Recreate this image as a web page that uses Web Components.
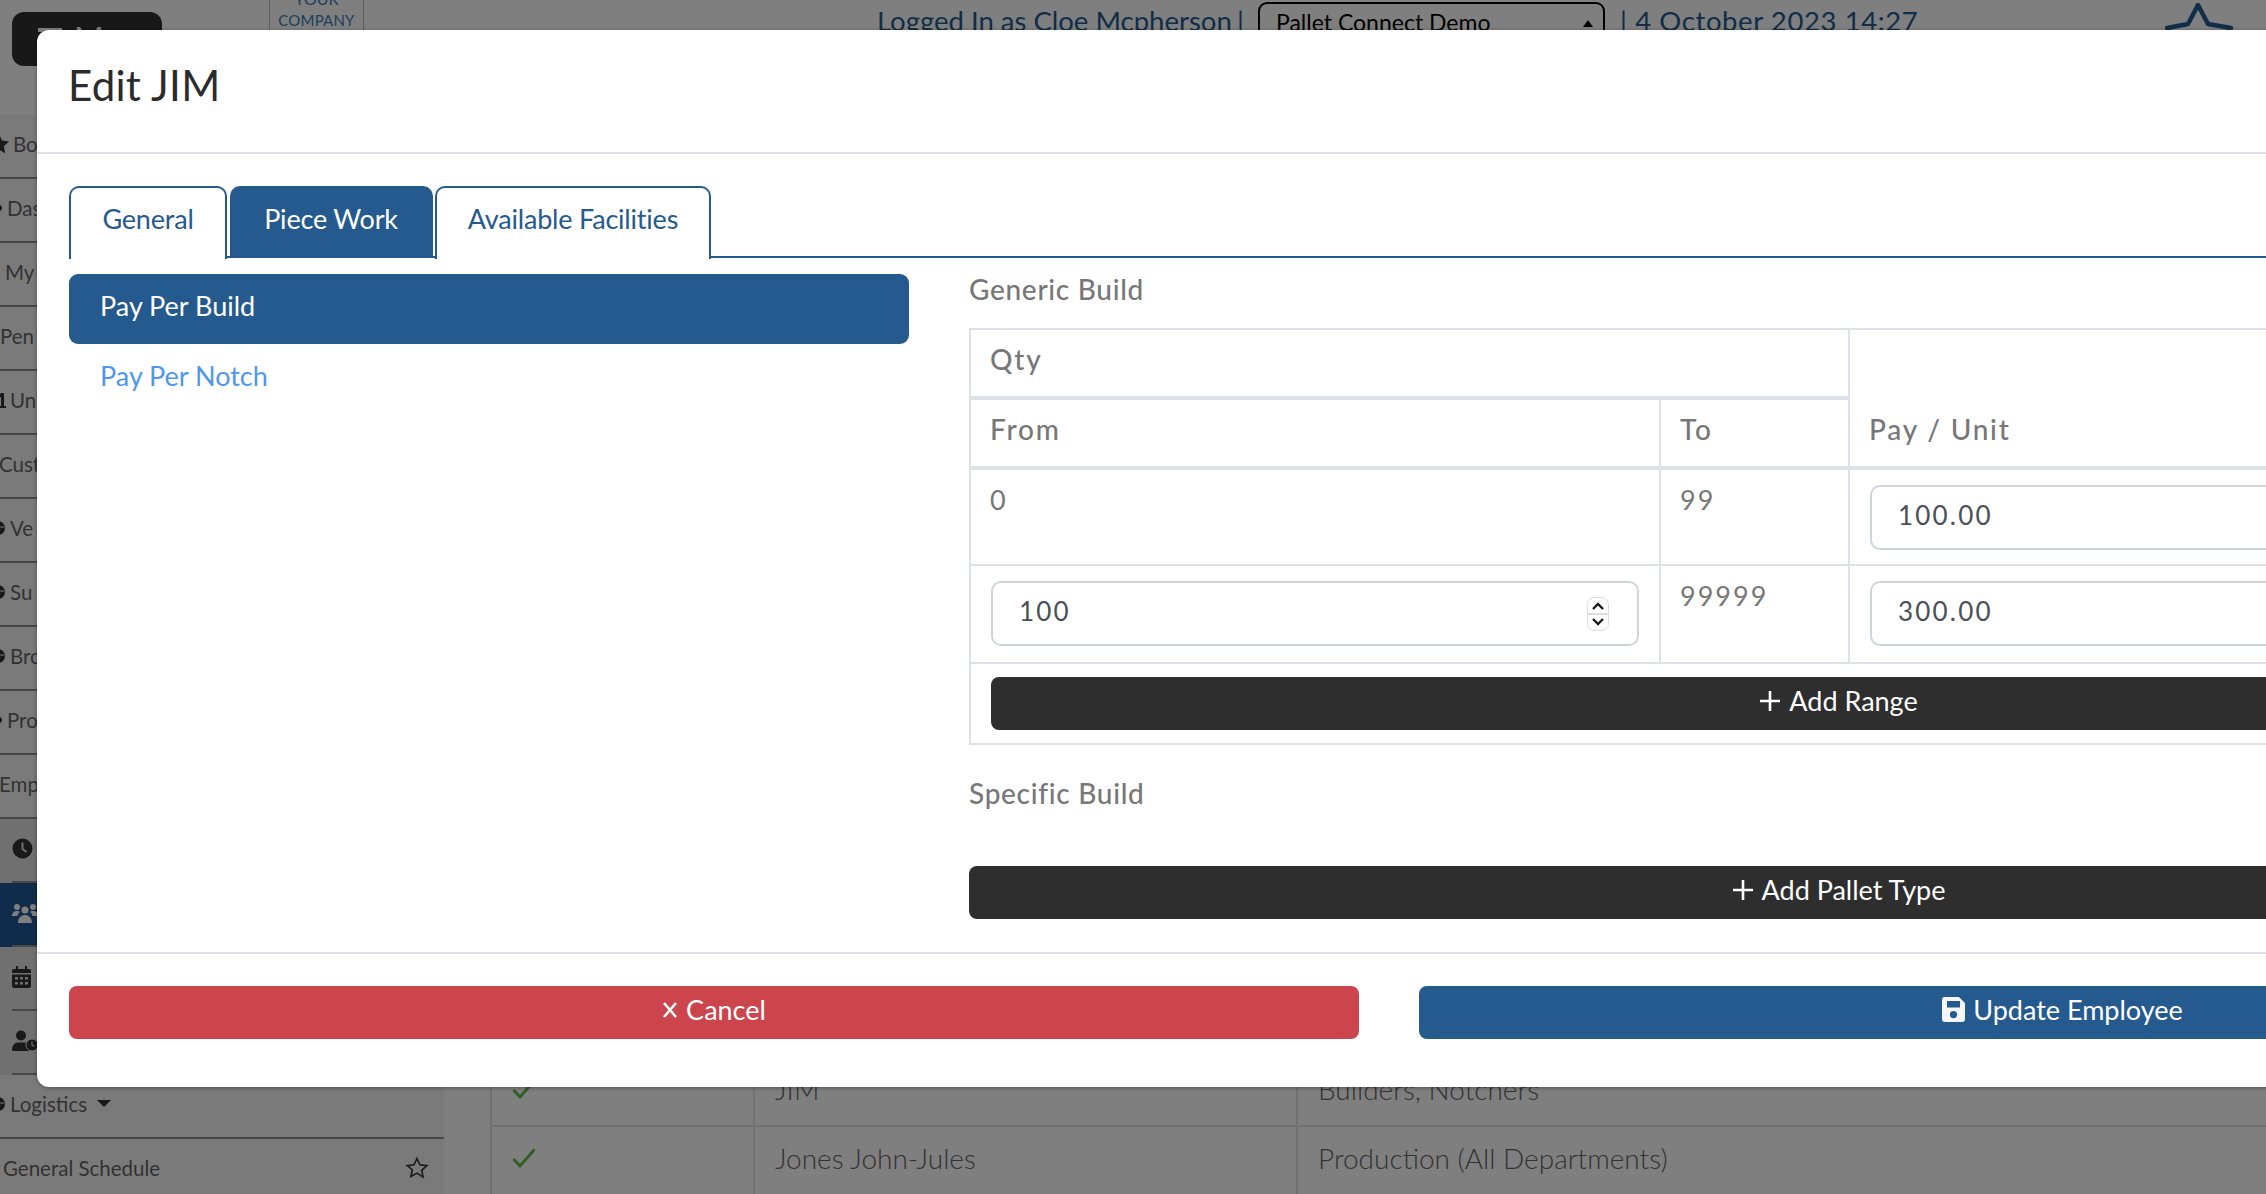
<!DOCTYPE html>
<html>
<head>
<meta charset="utf-8">
<title>Edit JIM</title>
<style>
html,body{margin:0;padding:0;width:2266px;height:1194px;overflow:hidden;background:#fff;font-family:Lato,"Liberation Sans",sans-serif;}
</style>
</head>
<body>
<back-page>
  <top-bar slot="top"></top-bar>
  <side-nav slot="side">
    <side-row icon="star" tx="13" label="Bo"></side-row>
    <side-row icon="dot" tx="7" label="Das"></side-row>
    <side-row tx="5" label="My"></side-row>
    <side-row tx="0" label="Pen"></side-row>
    <side-row icon="up" tx="10" label="Un"></side-row>
    <side-row tx="-1" label="Cust"></side-row>
    <side-row icon="ball" tx="10" label="Ve"></side-row>
    <side-row icon="ball" tx="10" label="Su"></side-row>
    <side-row icon="ball" tx="10" label="Bro"></side-row>
    <side-row icon="dot" tx="7" label="Pro"></side-row>
    <side-row tx="-1" label="Emp"></side-row>
    <side-sub icon="clock"></side-sub>
    <side-sub icon="users" active></side-sub>
    <side-sub icon="calendar"></side-sub>
    <side-sub icon="userclock"></side-sub>
    <side-row icon="ball" tx="10" label="Logistics" caret></side-row>
    <side-row tx="3" label="General Schedule" fav></side-row>
  </side-nav>
  <staff-table slot="main"></staff-table>
</back-page>

<modal-shade></modal-shade>

<edit-modal heading="Edit JIM">
  <tab-strip slot="tabs" active="1" items="General|Piece Work|Available Facilities"></tab-strip>
  <pay-pills slot="pills" active="0" items="Pay Per Build|Pay Per Notch"></pay-pills>
  <build-panel slot="panel"></build-panel>
  <wide-btn slot="cancel" kind="cancel" icon="x">Cancel</wide-btn>
  <wide-btn slot="save" kind="save" icon="save">Update Employee</wide-btn>
</edit-modal>

<script>
(function () {
  var ICONS = {
    plus: '<svg width="22" height="22" viewBox="0 0 22 22"><path d="M11 1v20M1 11h20" stroke="#fff" stroke-width="2.6" fill="none"/></svg>',
    x: '<svg width="16" height="18" viewBox="0 0 16 18"><path d="M2 2l12 14M14 2L2 16" stroke="#fff" stroke-width="2.6" fill="none"/></svg>',
    save: '<svg width="23" height="25" viewBox="0 0 23 25"><path fill-rule="evenodd" fill="#f4f6f9" d="M3 0h14l6 6v16a3 3 0 0 1-3 3H3a3 3 0 0 1-3-3V3a3 3 0 0 1 3-3zM5 4v6.500h13V4zM11.500 14a3.600 3.600 0 1 0 0 7.200a3.600 3.600 0 0 0 0-7.200z"/></svg>',
    star: '<svg width="20" height="20" viewBox="0 0 20 20"><path fill="#333" d="M10 0l3 6.600 7 .8-5.200 4.800 1.400 7L10 15.700 3.800 19.200l1.400-7L0 7.400l7-.8z"/></svg>',
    dot: '<svg width="20" height="20" viewBox="0 0 20 20"><circle cx="16" cy="10" r="3" fill="#333"/></svg>',
    up: '<svg width="20" height="20" viewBox="0 0 20 20"><path fill="#333" d="M15 3h3v13h2v2h-8v-2h3V7l-3 1V6z"/></svg>',
    ball: '<svg width="20" height="20" viewBox="0 0 20 20"><circle cx="12" cy="10" r="7" fill="#333"/><path d="M6 9h12" stroke="#f5f5f5" stroke-width="1"/></svg>',
    clock: '<svg width="21" height="21" viewBox="0 0 21 21"><circle cx="10.500" cy="10.500" r="10" fill="#333"/><path d="M10.500 4.500v6.500l4 3" stroke="#e0e0e0" stroke-width="2" fill="none"/></svg>',
    users: '<svg width="26" height="20" viewBox="0 0 26 20"><g fill="#fff"><circle cx="5" cy="4" r="3"/><circle cx="21" cy="4" r="3"/><circle cx="13" cy="7" r="3.500"/><path d="M0 13c0-3 2-5 5-5 1.500 0 2.500.5 3 1-1.500 1-2.500 2.500-2.500 4zM26 13c0-3-2-5-5-5-1.500 0-2.500.5-3 1 1.500 1 2.500 2.500 2.500 4zM6 20c0-5 3-8 7-8s7 3 7 8z"/></g></svg>',
    calendar: '<svg width="19" height="22" viewBox="0 0 19 22"><path fill="#333" fill-rule="evenodd" d="M4 0h2v3h7V0h2v3h2a2 2 0 0 1 2 2v2H0V5a2 2 0 0 1 2-2h2zM0 8.500h19V20a2 2 0 0 1-2 2H2a2 2 0 0 1-2-2zM3 11v2.500h3V11zm5 0v2.500h3V11zm5 0v2.500h3V11zM3 16v2.500h3V16zm5 0v2.500h3V16zm5 0v2.500h3V16z"/></svg>',
    userclock: '<svg width="26" height="22" viewBox="0 0 26 22"><circle cx="9" cy="5.500" r="5" fill="#333"/><path fill="#333" d="M0 20c0-5 3-7.500 6-7.500h6c1.500 0 3 .5 3.500 1.500-.5 2 0 5 2 7H2a2 2 0 0 1-2-1z"/><circle cx="20" cy="15" r="6" fill="#333" stroke="#e0e0e0" stroke-width="1"/><path d="M20 11.500V15l2.500 1.500" stroke="#e0e0e0" stroke-width="1.200" fill="none"/></svg>',
    outlineStar: '<svg width="24" height="24" viewBox="0 0 24 24"><path fill="none" stroke="#333" stroke-width="1.600" d="M12 2.500l2.900 6.300 6.900.8-5.100 4.700 1.400 6.800L12 17.100l-6.100 3.400 1.400-6.800L2.200 9.600l6.900-.8z"/></svg>',
    check: '<svg width="24" height="20" viewBox="0 0 24 20"><path d="M1.500 11l6.500 7L22.500 1.500" stroke="#5fbe3f" stroke-width="2.800" fill="none"/></svg>'
  };

  class BackPage extends HTMLElement {
    constructor() {
      super();
      this.attachShadow({ mode: "open" });
      this.shadowRoot.innerHTML =
        "<style>" +
        ":host{display:block;width:2266px;height:1194px;overflow:hidden;background:#fff;}" +
        ".lower{display:flex;height:1079px;}" +
        "</style>" +
        "<slot name='top'></slot>" +
        "<div class='lower'><slot name='side'></slot><slot name='main'></slot></div>";
    }
  }

  class TopBar extends HTMLElement {
    constructor() {
      super();
      this.attachShadow({ mode: "open" });
      this.shadowRoot.innerHTML =
        "<style>" +
        ":host{display:flex;height:115px;align-items:flex-start;font-family:Lato,sans-serif;color:#255a8e;}" +
        ".menu{margin:12px 0 0 12px;width:150px;height:54px;box-sizing:border-box;background:#303030;border-radius:12px;color:#fff;" +
        "font-size:32px;padding:10px 0 0 26px;display:flex;gap:12px;line-height:34px;}" +
        ".bars{width:24px;height:20px;margin-top:6px;border-top:4px solid #fff;border-bottom:4px solid #fff;position:relative;box-sizing:border-box;}" +
        ".logo{margin:-27px 0 0 107px;width:95px;height:130px;box-sizing:border-box;border:1px solid #bbb;text-align:center;color:#3f7cb4;line-height:1;}" +
        ".logo .your{font-size:16px;margin-top:17px;display:flex;justify-content:center;gap:6px;align-items:center;}" +
        ".logo .your i{display:block;width:12px;height:1px;background:#3f7cb4;}" +
        ".logo .co{font-size:15px;margin-top:6px;letter-spacing:.2px;}" +
        ".logo .lg{font-size:17px;margin-top:4px;}" +
        ".who{margin:3px 0 0 513px;width:381px;font-size:27.500px;line-height:36px;font-weight:400;white-space:nowrap;display:flex;justify-content:space-between;padding-right:14px;box-sizing:border-box;}" +
        ".sel{margin-top:2px;width:347px;height:50px;box-sizing:border-box;border:2px solid #000;border-radius:9px;font-size:23px;color:#000;padding:4px 0 0 16px;position:relative;font-weight:400;}" +
        ".sel::after{content:'';position:absolute;right:10px;top:16px;border:5px solid transparent;border-top:0;border-bottom:7px solid #000;}" +
        ".when{margin:3px 0 0 15px;font-size:27.500px;letter-spacing:.6px;line-height:36px;font-weight:400;white-space:nowrap;width:545px;}" +
        ".fav{margin-top:3px;}" +
        "</style>" +
        "<div class='menu'><span class='bars'></span><span>M</span></div>" +
        "<div class='logo'><div class='your'><i></i>YOUR<i></i></div><div class='co'>COMPANY</div><div class='lg'>LOGO</div></div>" +
        "<div class='who'><span>Logged In as Cloe Mcpherson</span><span>|</span></div>" +
        "<div class='sel'>Pallet Connect Demo</div>" +
        "<div class='when'>| 4 October 2023 14:27</div>" +
        "<svg class='fav' width='70' height='60' viewBox='0 0 70 60'><path fill='none' stroke='#255a8e' stroke-width='4.500' stroke-linejoin='round' d='M33 2L43 21 66 25 49 43 53 58 33 50 13 58 17 43 2 25 23 21z'/></svg>";
    }
  }

  class SideNav extends HTMLElement {
    constructor() {
      super();
      this.attachShadow({ mode: "open" });
      this.shadowRoot.innerHTML =
        "<style>:host{display:block;width:444px;flex:none;background:#f5f5f5;}</style><slot></slot>";
    }
  }

  class SideRow extends HTMLElement {
    connectedCallback() {
      if (this.shadowRoot) {
        return;
      }
      this.attachShadow({ mode: "open" });
      var tx = parseInt(this.getAttribute("tx") || "0", 10);
      var icon = ICONS[this.getAttribute("icon")] || "<span style='width:20px'></span>";
      this.shadowRoot.innerHTML =
        "<style>" +
        ":host{display:flex;align-items:center;height:64px;box-sizing:border-box;border-bottom:2px solid #909090;padding-bottom:5px;" +
        "font-family:Lato,sans-serif;font-size:20.500px;color:#666;white-space:nowrap;}" +
        ".ic{display:flex;flex:none;width:20px;}" +
        ".lb{margin-left:4px;}" +
        ".caret{margin-left:10px;border:7px solid transparent;border-bottom:0;border-top:7px solid #333;}" +
        ".fav{margin-left:auto;margin-right:15px;display:flex;}" +
        "</style>" +
        "<span class='ic' style='margin-left:" + (tx - 24) + "px'>" + icon + "</span>" +
        "<span class='lb'>" + this.getAttribute("label") + "</span>" +
        (this.hasAttribute("caret") ? "<span class='caret'></span>" : "") +
        (this.hasAttribute("fav") ? "<span class='fav'>" + ICONS.outlineStar + "</span>" : "");
    }
  }

  class SideSub extends HTMLElement {
    connectedCallback() {
      if (this.shadowRoot) {
        return;
      }
      this.attachShadow({ mode: "open" });
      this.shadowRoot.innerHTML =
        "<style>" +
        ":host{display:block;height:64px;box-sizing:border-box;background:#e0e0e0;padding-left:12px;}" +
        ".in{height:64px;box-sizing:border-box;border-bottom:2px solid #909090;display:flex;align-items:center;padding-bottom:3px;}" +
        ":host([active]){background:#1f5a94;}" +
        "</style>" +
        "<div class='in'>" + ICONS[this.getAttribute("icon")] + "</div>";
    }
  }

  class StaffTable extends HTMLElement {
    constructor() {
      super();
      this.attachShadow({ mode: "open" });
      var rows = [["JIM", "Builders, Notchers"], ["Jones John-Jules", "Production (All Departments)"]];
      var html = "";
      for (var i = 0; i < rows.length; i++) {
        html +=
          "<div class='c chk r" + i + "'>" + ICONS.check + "</div>" +
          "<div class='c r" + i + "'>" + rows[i][0] + "</div>" +
          "<div class='c r" + i + "'>" + rows[i][1] + "</div>";
      }
      this.shadowRoot.innerHTML =
        "<style>" +
        ":host{display:block;flex:1;margin:946px 0 0 46px;font-family:Lato,sans-serif;font-size:28px;font-weight:300;color:#666;}" +
        ".t{display:grid;grid-template-columns:263px 543px 1fr;grid-template-rows:66px 80px;border-left:2px solid #dee2e6;}" +
        ".c{box-sizing:border-box;border-right:2px solid #dee2e6;padding:12px 20px 0 20px;line-height:38px;}" +
        ".r0{border-bottom:2px solid #dee2e6;padding-top:9px;}" +
        ".chk{padding-top:18px;line-height:0;}" +
        ".chk.r1{padding-top:21px;}" +
        ".c:nth-child(3n){border-right:0;}" +
        "</style>" +
        "<div class='t'>" + html + "</div>";
    }
  }

  class ModalShade extends HTMLElement {
    constructor() {
      super();
      this.attachShadow({ mode: "open" });
      this.shadowRoot.innerHTML =
        "<style>:host{display:block;position:absolute;left:0;top:0;width:2266px;height:1194px;background:rgba(0,0,0,.5);}</style>";
    }
  }

  class EditModal extends HTMLElement {
    connectedCallback() {
      if (this.shadowRoot) {
        return;
      }
      this.attachShadow({ mode: "open" });
      this.shadowRoot.innerHTML =
        "<style>" +
        ":host{display:block;position:absolute;left:37px;top:30px;width:2703px;background:#fff;border-radius:12px;" +
        "box-shadow:0 1px 4px rgba(0,0,0,.35);font-family:Lato,sans-serif;}" +
        ".head{height:124px;box-sizing:border-box;border-bottom:2px solid #dee2e6;padding:29px 32px 0 31px;}" +
        "h5{margin:0;font-size:42px;line-height:52px;font-weight:400;color:#2b2b2b;letter-spacing:.3px;}" +
        ".body{padding:32px 32px 32px;height:798px;box-sizing:border-box;}" +
        ".cols{display:grid;grid-template-columns:840px 1739px;column-gap:60px;margin-top:16px;}" +
        ".foot{border-top:2px solid #dee2e6;padding:32px 32px 48px;display:grid;grid-template-columns:1290px 1287px;column-gap:60px;}" +
        "</style>" +
        "<div class='head'><h5>" + this.getAttribute("heading") + "</h5></div>" +
        "<div class='body'><slot name='tabs'></slot>" +
        "<div class='cols'><slot name='pills'></slot><slot name='panel'></slot></div></div>" +
        "<div class='foot'><slot name='cancel'></slot><slot name='save'></slot></div>";
    }
  }

  class TabStrip extends HTMLElement {
    connectedCallback() {
      if (this.shadowRoot) {
        return;
      }
      this.attachShadow({ mode: "open" });
      var items = this.getAttribute("items").split("|");
      var active = parseInt(this.getAttribute("active"), 10);
      var widths = [158, 203, 276];
      var html = "";
      for (var i = 0; i < items.length; i++) {
        html += "<div class='tab" + (i === active ? " on" : "") + "' style='width:" + widths[i] + "px'>" + items[i] + "</div>";
      }
      this.shadowRoot.innerHTML =
        "<style>" +
        ":host{display:flex;gap:2.500px;height:72px;box-sizing:border-box;border-bottom:2px solid #255a8e;width:2639px;}" +
        ".tab{box-sizing:border-box;height:73px;border:2px solid #255a8e;border-bottom:0;border-radius:10px 10px 0 0;background:#fff;" +
        "color:#255a8e;font-size:27px;font-weight:400;letter-spacing:-.2px;line-height:62px;text-align:center;white-space:nowrap;}" +
        ".on{background:#255a8e;color:#fff;height:71px;}" +
        "</style>" + html;
    }
  }

  class PayPills extends HTMLElement {
    connectedCallback() {
      if (this.shadowRoot) {
        return;
      }
      this.attachShadow({ mode: "open" });
      var items = this.getAttribute("items").split("|");
      var active = parseInt(this.getAttribute("active"), 10);
      var html = "";
      for (var i = 0; i < items.length; i++) {
        html += "<div class='pill" + (i === active ? " on" : "") + "'>" + items[i] + "</div>";
      }
      this.shadowRoot.innerHTML =
        "<style>" +
        ":host{display:block;}" +
        ".pill{height:70px;line-height:63px;padding-left:31px;border-radius:9px;font-size:27px;font-weight:400;color:#4f97ee;}" +
        ".on{background:#255a8e;color:#fff;}" +
        "</style>" + html;
    }
  }

  class WideBtn extends HTMLElement {
    connectedCallback() {
      if (this.shadowRoot) {
        return;
      }
      this.attachShadow({ mode: "open" });
      var kind = this.getAttribute("kind") || "dark";
      var colors = { dark: "#2e2e2e", cancel: "#cc444c", save: "#255a8e" };
      this.shadowRoot.innerHTML =
        "<style>" +
        ":host{display:flex;align-items:center;justify-content:center;gap:8px;height:53px;box-sizing:border-box;padding-bottom:6px;border-radius:8px;" +
        "background:" + colors[kind] + ";color:#fff;font-family:Lato,sans-serif;font-size:27px;letter-spacing:0;line-height:34px;font-weight:400;white-space:nowrap;}" +
        "span{display:flex;}" +
        "</style>" +
        "<span>" + ICONS[this.getAttribute("icon")] + "</span><slot></slot>";
    }
  }

  class NumBox extends HTMLElement {
    connectedCallback() {
      if (this.shadowRoot) {
        return;
      }
      this.attachShadow({ mode: "open" });
      var spin = this.hasAttribute("spin")
        ? "<svg class='spin' width='22' height='34' viewBox='0 0 22 34'>" +
          "<rect x='.5' y='.5' width='21' height='33' rx='7' fill='#fff' stroke='#dcdcdc'/>" +
          "<path d='M1 17h20' stroke='#d0d0d0' stroke-width='1.500'/>" +
          "<path d='M6 12l5-5 5 5M6 22l5 5 5-5' stroke='#1a1a1a' stroke-width='2.400' fill='none'/></svg>"
        : "";
      this.shadowRoot.innerHTML =
        "<style>" +
        ":host{display:flex;align-items:center;justify-content:space-between;height:65px;box-sizing:border-box;border:2px solid #ced4da;border-radius:10px;" +
        "padding:0 28px 6px 26px;font-size:26px;letter-spacing:2.200px;color:#495057;font-weight:400;}" +
        ".spin{margin-top:6px;}" +
        "</style>" +
        "<span>" + this.getAttribute("value") + "</span>" + spin;
    }
  }

  class RangeTable extends HTMLElement {
    constructor() {
      super();
      this.attachShadow({ mode: "open" });
      this.shadowRoot.innerHTML =
        "<style>" +
        ":host{display:block;border:2px solid #dee2e6;box-sizing:border-box;font-family:Lato,sans-serif;}" +
        ".g{display:grid;grid-template-columns:690px 189px 1fr;grid-template-rows:70px 70px 96px 98px 79px;}" +
        ".c{box-sizing:border-box;border-right:2px solid #dee2e6;border-bottom:2px solid #dee2e6;padding:15px 0 0 19px;color:#777;font-size:27px;letter-spacing:2px;line-height:30px;}" +
        ".th{border-bottom-width:4px;font-size:28px;font-weight:500;letter-spacing:1.800px;line-height:36px;padding-top:11px;}" +
        ".l{padding-left:19px;}" +
        ".last{border-right:0;}" +
        ".pay{grid-column:3;grid-row:1 / span 2;display:flex;align-items:flex-end;padding-bottom:19px;}" +
        ".wrap{padding:15px 20px 0 20px;}" +
        ".foot{grid-column:1 / span 3;border:0;padding:13px 20px 0 20px;}" +
        "</style>" +
        "<div class='g'>" +
        "<div class='c th l' style='grid-column:1 / span 2;grid-row:1'>Qty</div>" +
        "<div class='c th last pay'>Pay / Unit</div>" +
        "<div class='c th l' style='grid-column:1;grid-row:2'>From</div>" +
        "<div class='c th' style='grid-column:2;grid-row:2'>To</div>" +
        "<div class='c l'>0</div><div class='c'>99</div><div class='c last wrap'><num-box value='100.00'></num-box></div>" +
        "<div class='c wrap'><num-box value='100' spin></num-box></div><div class='c'>99999</div><div class='c last wrap'><num-box value='300.00'></num-box></div>" +
        "<div class='c foot'><wide-btn icon='plus'>Add Range</wide-btn></div>" +
        "</div>";
    }
  }

  class BuildPanel extends HTMLElement {
    constructor() {
      super();
      this.attachShadow({ mode: "open" });
      this.shadowRoot.innerHTML =
        "<style>" +
        ":host{display:block;font-family:Lato,sans-serif;}" +
        "h6{margin:0;font-size:28px;line-height:32px;font-weight:500;color:#777;letter-spacing:.7px;}" +
        "range-table{display:block;margin-top:22px;}" +
        ".gen{margin-top:-1px;padding-bottom:1px;}" +
        ".spec{margin-top:32px;}" +
        "wide-btn{margin-top:57px;}" +
        "</style>" +
        "<h6 class='gen'>Generic Build</h6>" +
        "<range-table></range-table>" +
        "<h6 class='spec'>Specific Build</h6>" +
        "<wide-btn icon='plus'>Add Pallet Type</wide-btn>";
    }
  }

  customElements.define("back-page", BackPage);
  customElements.define("top-bar", TopBar);
  customElements.define("side-nav", SideNav);
  customElements.define("side-row", SideRow);
  customElements.define("side-sub", SideSub);
  customElements.define("staff-table", StaffTable);
  customElements.define("modal-shade", ModalShade);
  customElements.define("edit-modal", EditModal);
  customElements.define("tab-strip", TabStrip);
  customElements.define("pay-pills", PayPills);
  customElements.define("wide-btn", WideBtn);
  customElements.define("num-box", NumBox);
  customElements.define("range-table", RangeTable);
  customElements.define("build-panel", BuildPanel);
})();
</script>
</body>
</html>
